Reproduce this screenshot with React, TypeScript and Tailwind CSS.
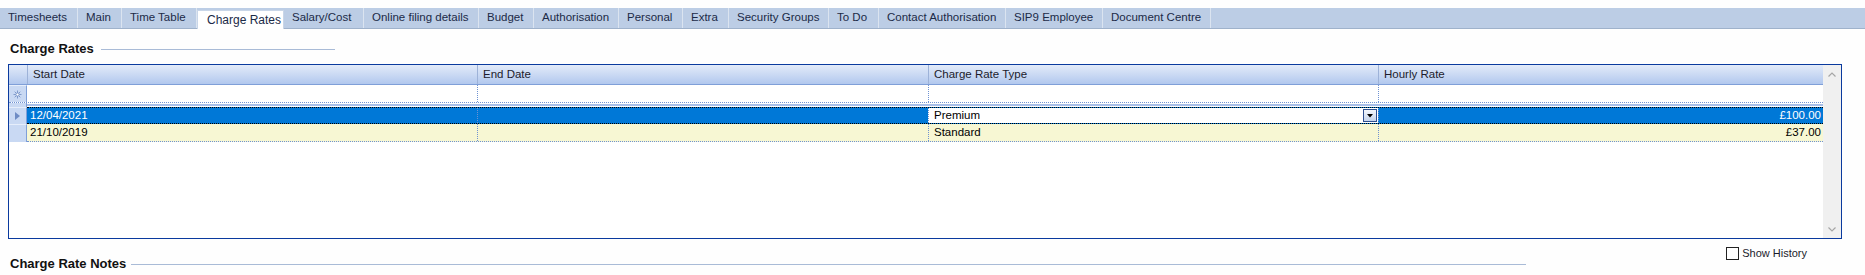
import { ReactNode } from 'react';

const tabs: [string, number][] = [
    ['Timesheets', 78],
    ['Main', 44],
    ['Time Table', 75],
    ['Charge Rates', 87],
    ['Salary/Cost', 80],
    ['Online filing details', 115],
    ['Budget', 55],
    ['Authorisation', 85],
    ['Personal', 64],
    ['Extra', 46],
    ['Security Groups', 100],
    ['To Do', 50],
    ['Contact Authorisation', 127],
    ['SIP9 Employee', 97],
    ['Document Centre', 108],
];

function StarIcon() {
    return (
        <svg width="9" height="9" viewBox="0 0 9 9" className="text-[#7f9acb]">
            <g stroke="currentColor" strokeWidth="1">
                <line x1="4.5" y1="0.5" x2="4.5" y2="8.5" />
                <line x1="0.5" y1="4.5" x2="8.5" y2="4.5" />
                <line x1="1.7" y1="1.7" x2="7.3" y2="7.3" />
                <line x1="7.3" y1="1.7" x2="1.7" y2="7.3" />
            </g>
            <circle cx="4.5" cy="4.5" r="1.6" fill="white" stroke="currentColor" />
        </svg>
    );
}

function Chevron({ down }: { down?: boolean }) {
    return (
        <svg width="8" height="5" viewBox="0 0 8 5" className={down ? 'rotate-180' : ''}>
            <path d="M0.5 4.5 L4 1 L7.5 4.5" fill="none" stroke="#a6a6a6" strokeWidth="1.2" />
        </svg>
    );
}

function Selector({ children, className = '' }: { children?: ReactNode; className?: string }) {
    return (
        <div className={`w-[18px] shrink-0 flex items-center justify-center bg-[#c9d9f3] border-r border-[#7f9fd8] border-t border-t-[#e6eefb] ${className}`}>
            {children}
        </div>
    );
}

export default function App() {
    return (
        <div className="w-[1865px] h-[275px] bg-[#fefefe] overflow-hidden text-[11px] text-black" style={{ fontFamily: '"Liberation Sans", Arial, sans-serif' }}>
            {/* Tab strip */}
            <div className="mt-[8px] h-[21px] flex bg-[#bccde5] border-b border-[#9fb2cb]">
                {tabs.map(([label, w]) =>
                    label === 'Charge Rates' ? (
                        <div
                            key={label}
                            style={{ width: w }}
                            className="self-end h-[19px] mb-[-1px] bg-white border-x border-t border-[#c9d6e8] flex items-center pl-[9px] text-[#1b2a47] text-[12px]"
                        >
                            {label}
                        </div>
                    ) : (
                        <div key={label} style={{ width: w }} className="h-full flex items-center pl-[8px] border-r border-[#dbe4f0] text-[#1b2a47] text-[11.5px]">
                            {label}
                        </div>
                    )
                )}
            </div>

            {/* Charge Rates heading */}
            <div className="mt-[13px] ml-[10px] h-[14px] flex items-center gap-[7px]">
                <span className="font-bold text-[13px] text-[#111]">Charge Rates</span>
                <div className="w-[234px] h-px bg-[#a9bbd7]" />
            </div>

            {/* Grid */}
            <div className="mt-[8px] ml-[8px] w-[1834px] h-[175px] border border-[#0a3a9e] flex bg-white">
                <div className="flex-1 flex flex-col">
                    {/* header */}
                    <div className="h-[20px] flex bg-gradient-to-b from-[#e3ebf9] to-[#b2c8ee] border-b border-[#7f9fd8]">
                        <div className="w-[18px] shrink-0" />
                        {[
                            ['Start Date', 450],
                            ['End Date', 451],
                            ['Charge Rate Type', 450],
                            ['Hourly Rate', 445],
                        ].map(([label, w]) => (
                            <div key={label as string} style={{ width: w as number }} className="flex items-center pl-[5px] border-l border-[#9db2d8] text-[#1c1c2c] text-[11.5px]">
                                {label}
                            </div>
                        ))}
                    </div>

                    {/* new row */}
                    <div className="h-[18px] flex border-b border-dotted border-[#6f92d2]">
                        <Selector>
                            <StarIcon />
                        </Selector>
                        <div className="w-[450px]" />
                        <div className="w-[451px] border-l border-dotted border-[#6f92d2]" />
                        <div className="w-[450px] border-l border-dotted border-[#6f92d2]" />
                        <div className="w-[445px] border-l border-dotted border-[#6f92d2]" />
                    </div>
                    <div className="h-[4px] flex">
                        <div className="w-[18px] bg-[#c9d9f3] border-r border-[#7f9fd8]" />
                        <div className="flex-1 flex flex-col justify-center">
                            <div className="h-[2px] bg-[#a8bfe8]" />
                        </div>
                    </div>

                    {/* selected row */}
                    <div className="h-[17px] flex text-[11.5px]">
                        <Selector>
                            <svg width="5" height="8" viewBox="0 0 5 8">
                                <path d="M0 0 L5 4 L0 8 Z" fill="#6f8cc4" />
                            </svg>
                        </Selector>
                        <div className="flex-1 flex border-y border-dotted border-black bg-[#0078d7] text-white">
                            <div className="w-[450px] flex items-center pl-[3px]">12/04/2021</div>
                            <div className="w-[451px] border-l border-dotted border-[#6f92d2]" />
                            <div className="w-[450px] flex items-center bg-white text-black pl-[5px] pr-[1px] border-l border-dotted border-[#6f92d2]">
                                <span className="flex-1">Premium</span>
                                <div className="w-[14px] h-[13px] border border-[#2f4f8f] bg-gradient-to-b from-[#f4f7fc] to-[#c5d4ec] flex items-center justify-center">
                                    <svg width="6" height="4" viewBox="0 0 6 4">
                                        <path d="M0 0 L6 0 L3 3.5 Z" fill="#000" />
                                    </svg>
                                </div>
                            </div>
                            <div className="w-[445px] flex items-center justify-end pr-[2px] border-l border-dotted border-[#6f92d2]">£100.00</div>
                        </div>
                    </div>

                    {/* row 2 */}
                    <div className="h-[18px] flex text-[11.5px]">
                        <Selector />
                        <div className="flex-1 flex bg-[#f7f7d3] border-b border-dotted border-[#6f92d2]">
                            <div className="w-[450px] flex items-center pl-[3px]">21/10/2019</div>
                            <div className="w-[451px] border-l border-dotted border-[#6f92d2]" />
                            <div className="w-[450px] flex items-center pl-[5px] border-l border-dotted border-[#6f92d2]">Standard</div>
                            <div className="w-[445px] flex items-center justify-end pr-[2px] border-l border-dotted border-[#6f92d2]">£37.00</div>
                        </div>
                    </div>
                </div>

                {/* scrollbar */}
                <div className="w-[18px] bg-[#f0f0f0] flex flex-col items-center justify-between pt-[7px] pb-[6px]">
                    <Chevron />
                    <Chevron down />
                </div>
            </div>

            {/* Show History */}
            <div className="mt-[8px] h-[13px] flex justify-end pr-[58px] items-center gap-[3px]">
                <div className="w-[13px] h-[13px] border border-[#222] bg-white" />
                <span className="text-[#1b1b2b] text-[11px]">Show History</span>
            </div>

            {/* Charge Rate Notes */}
            <div className="-mt-[2px] ml-[10px] h-[12px] flex items-center gap-[5px]">
                <span className="font-bold text-[13px] text-[#111]">Charge Rate Notes</span>
                <div className="w-[1395px] h-px bg-[#a9bbd7]" />
            </div>
        </div>
    );
}
